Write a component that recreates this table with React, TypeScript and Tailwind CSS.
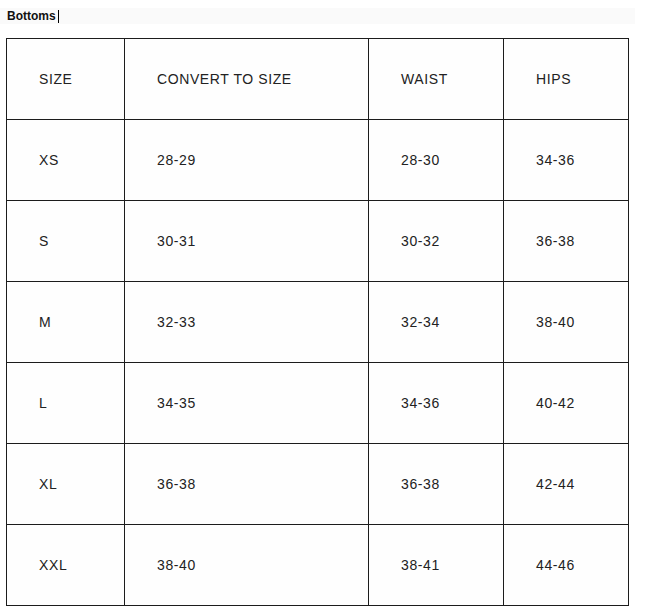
import React from "react";

const rows = [
  ["SIZE", "CONVERT TO SIZE", "WAIST", "HIPS"],
  ["XS", "28-29", "28-30", "34-36"],
  ["S", "30-31", "30-32", "36-38"],
  ["M", "32-33", "32-34", "38-40"],
  ["L", "34-35", "34-36", "40-42"],
  ["XL", "36-38", "36-38", "42-44"],
  ["XXL", "38-40", "38-41", "44-46"],
];

export default function App() {
  return (
    <div className="w-[649px] h-[616px] bg-white" style={{ fontFamily: '"Liberation Sans", Arial, sans-serif' }}>
      <div className="pt-[8px]">
        <div className="h-[16px] w-[635px] bg-[#fafafa] flex items-center pl-[7px]">
          <span className="text-[12px] font-bold text-[#111] leading-[16px]">Bottoms</span>
          <span className="ml-[2px] w-[1px] h-[13px] bg-black" />
        </div>
      </div>
      <table className="ml-[6px] mt-[14px] border-collapse table-fixed w-[622px] bg-[#fefefe]">
        <colgroup>
          <col className="w-[118px]" />
          <col className="w-[244px]" />
          <col className="w-[135px]" />
          <col className="w-[125px]" />
        </colgroup>
        <tbody>
          {rows.map((r, i) => (
            <tr key={i} className="h-[81px]">
              {r.map((c, j) => (
                <td
                  key={j}
                  className="border border-[#1c1c1c] pl-[32px] align-middle text-[14px] tracking-[0.6px] text-[#222] p-0"
                >
                  {c}
                </td>
              ))}
            </tr>
          ))}
        </tbody>
      </table>
    </div>
  );
}
